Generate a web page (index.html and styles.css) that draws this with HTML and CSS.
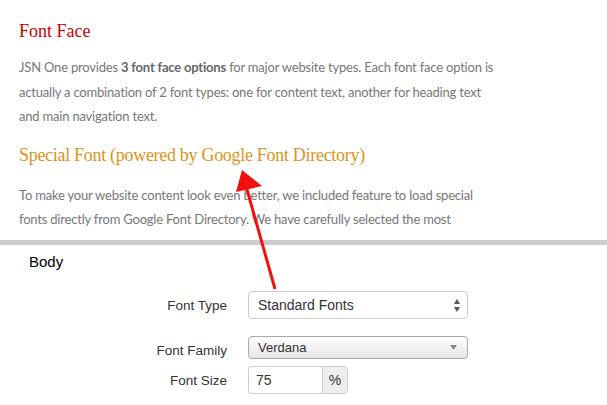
FILE: index.html
```html
<!DOCTYPE html>
<html>
<head>
<meta charset="utf-8">
<link rel="stylesheet" href="styles.css">
</head>
<body>
<div class="doc">
  <h2 class="title">Font Face</h2>
  <p class="text">JSN One provides <b>3 font face options</b> for major website types. Each font face option is<br>actually a combination of 2 font types: one for content text, another for heading text<br>and main navigation text.</p>
  <h3 class="special">Special Font (powered by Google Font Directory)</h3>
  <p class="text">To make your website content look even better, we included feature to load special<br>fonts directly from Google Font Directory. We have carefully selected the most</p>
</div>
<div class="divider"></div>
<div class="panel">
  <div class="section-title">Body</div>
  <div class="form">
    <div class="row row-type">
      <label class="lbl">Font Type</label>
      <div class="select native">
        <span>Standard Fonts</span>
        <svg class="updown" width="6" height="13" viewBox="0 0 6 13"><polygon points="3,0 6,5 0,5" fill="#555"/><polygon points="0,8 6,8 3,13" fill="#555"/></svg>
      </div>
    </div>
    <div class="row row-family">
      <label class="lbl lbl-family">Font Family</label>
      <div class="select styled">
        <span>Verdana</span>
        <svg class="down" width="7" height="5" viewBox="0 0 7 5"><polygon points="0,0 7,0 3.5,5" fill="#888"/></svg>
      </div>
    </div>
    <div class="row row-size">
      <label class="lbl">Font Size</label>
      <div class="input-group">
        <div class="input">75</div>
        <div class="addon">%</div>
      </div>
    </div>
  </div>
</div>
<svg class="arrow" width="607" height="405" viewBox="0 0 607 405">
  <line x1="275" y1="289" x2="246" y2="186" stroke="#f01010" stroke-width="3"/>
  <polygon points="242,170 236,192 262,186" fill="#f01010"/>
</svg>
</body>
</html>
```
FILE: styles.css
```css
html, body {
  margin: 0;
  padding: 0;
  background: #fff;
  width: 607px;
  height: 405px;
  overflow: hidden;
}
body {
  position: relative;
  font-family: "Liberation Sans", Arial, sans-serif;
}
.doc {
  height: 240px;
  overflow: hidden;
  padding: 0 19px;
  box-sizing: border-box;
}
.title {
  margin: 0;
  padding-top: 20px;
  font-family: "Liberation Serif", serif;
  font-weight: normal;
  font-size: 18px;
  line-height: 22px;
  letter-spacing: 0;
  color: #cc0000;
}
.special {
  margin: 15px 0 0;
  font-family: "Liberation Serif", serif;
  font-weight: normal;
  font-size: 18px;
  line-height: 22px;
  letter-spacing: -0.3px;
  color: #dc9320;
}
.text {
  margin: 13px 0 0;
  font-family: Lato, "Liberation Sans", sans-serif;
  font-size: 13px;
  line-height: 24.5px;
  letter-spacing: -0.2px;
  color: #777;
  white-space: nowrap;
}
.special + .text {
  margin-top: 17px;
}
.text b {
  color: #666;
}
.divider {
  height: 5px;
  background: #ccc;
}
.panel {
  padding-top: 8px;
}
.section-title {
  padding-left: 29px;
  font-size: 15px;
  line-height: 18px;
  color: #000;
}
.form {
  margin-top: 20px;
  display: flex;
  flex-direction: column;
}
.row {
  display: flex;
  align-items: center;
  gap: 21px;
}
.row-family {
  margin-top: 17px;
}
.row-size {
  margin-top: 7px;
}
.lbl {
  width: 227px;
  flex: none;
  text-align: right;
  font-size: 13.5px;
  color: #333;
}
.lbl-family {
  padding-top: 5px;
}
.select {
  box-sizing: border-box;
  width: 220px;
  display: flex;
  align-items: center;
  justify-content: space-between;
  padding: 0 7px 0 9px;
  font-size: 14px;
  color: #333;
  border-radius: 4px;
}
.native {
  height: 28px;
  border: 1px solid #ccc;
  background: #fff;
}
.styled {
  height: 23px;
  border: 1px solid #aaa;
  background: linear-gradient(#ffffff, #e6e6e6);
  font-size: 13px;
  padding-right: 10px;
}
.input-group {
  display: flex;
  height: 28px;
}
.input {
  box-sizing: border-box;
  width: 74px;
  height: 28px;
  border: 1px solid #ccc;
  border-right: none;
  border-radius: 4px 0 0 4px;
  padding: 0 7px;
  font-size: 14px;
  line-height: 26px;
  color: #333;
}
.addon {
  box-sizing: border-box;
  width: 26px;
  height: 28px;
  border: 1px solid #ccc;
  border-radius: 0 4px 4px 0;
  background: #eee;
  font-size: 14px;
  line-height: 26px;
  text-align: center;
  color: #333;
}
.arrow {
  position: absolute;
  left: 0;
  top: 0;
  pointer-events: none;
}
```
